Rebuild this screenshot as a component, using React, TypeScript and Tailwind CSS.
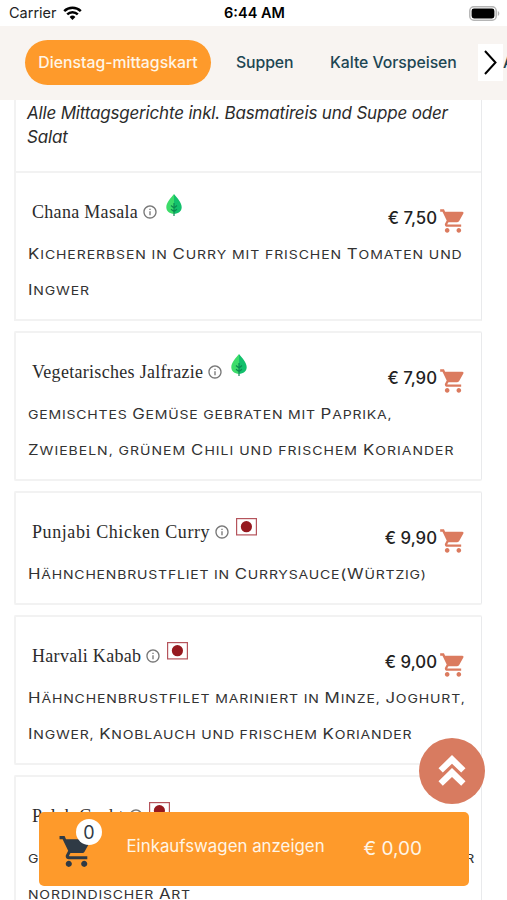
import { Fragment } from 'react'
import { MdShoppingCart, MdInfoOutline } from 'react-icons/md'

type Dish = {
  name: string
  nameClass: string
  kind: 'veg' | 'meat'
  price: string
  lines: { text: string; className: string }[]
}

const featured: Dish = {
  name: 'Chana Masala',
  nameClass: 'tracking-[0.3px]',
  kind: 'veg',
  price: '€ 7,50',
  lines: [
    { text: 'Kichererbsen in Curry mit frischen Tomaten und', className: 'tracking-[0.74px]' },
    { text: 'Ingwer', className: 'tracking-[0.67px]' },
  ],
}

const dishes: Dish[] = [
  {
    name: 'Vegetarisches Jalfrazie',
    nameClass: 'tracking-[0.3px]',
    kind: 'veg',
    price: '€ 7,90',
    lines: [
      { text: 'gemischtes Gemüse gebraten mit Paprika,', className: 'tracking-[0.65px]' },
      { text: 'Zwiebeln, grünem Chili und frischem Koriander', className: 'tracking-[0.81px]' },
    ],
  },
  {
    name: 'Punjabi Chicken Curry',
    nameClass: 'tracking-[0.58px]',
    kind: 'meat',
    price: '€ 9,90',
    lines: [{ text: 'Hähnchenbrustfliet in Currysauce(Würtzig)', className: 'tracking-[0.65px]' }],
  },
  {
    name: 'Harvali Kabab',
    nameClass: 'tracking-[0.3px]',
    kind: 'meat',
    price: '€ 9,00',
    lines: [
      { text: 'Hähnchenbrustfilet mariniert in Minze, Joghurt,', className: 'tracking-[0.7px]' },
      { text: 'Ingwer, Knoblauch und frischem Koriander', className: 'tracking-[0.65px]' },
    ],
  },
  {
    name: 'Palak Gosht',
    nameClass: 'tracking-[0.4px]',
    kind: 'meat',
    price: '€ 9,90',
    lines: [
      { text: 'gebratenes Lammfleisch mit feinem Spinat nach der', className: 'tracking-[0.54px]' },
      { text: 'nordindischer Art', className: 'tracking-[0.65px]' },
    ],
  },
]

export default function App() {
  return (
    <div className="relative flex h-[900px] w-[507px] flex-col overflow-hidden bg-white font-['Inter',sans-serif] text-[#2b2b2b]">
      <StatusBar />
      <CategoryTabs />
      <main className="min-h-0 flex-1 overflow-hidden pl-[14px]">
        <div className="flex w-[467.5px] flex-col gap-[9.6px]">
          <section className="border-2 border-r border-t-0 border-[#f2f2f2] border-r-[#e9eaec]">
            <p className="h-[72.5px] border-b-2 border-[#f2f2f2] pl-[11px] pt-px text-[17px] italic leading-[24px] tracking-[-0.18px]">
              Alle Mittagsgerichte inkl. Basmatireis und Suppe oder
              <br />
              Salat
            </p>
            <DishRow dish={featured} />
          </section>
          {dishes.map((dish) => (
            <section
              key={dish.name}
              className="rounded-[2px] border-2 border-r border-[#f2f2f2] border-r-[#e9eaec]"
            >
              <DishRow dish={dish} />
            </section>
          ))}
        </div>
      </main>
      <ScrollTopButton />
      <CartBar />
    </div>
  )
}

function StatusBar() {
  return (
    <header className="grid h-[26px] shrink-0 grid-cols-3 items-center pl-[9px] pr-[7px] text-black">
      <div className="flex items-center gap-[6px]">
        <span className="text-[14.5px] leading-[26px] text-[#222]">Carrier</span>
        <svg width="19" height="14" viewBox="0 0 19 14" fill="none" stroke="#000" strokeWidth="2.5">
          <path d="M1.2 5.2a12 12 0 0 1 16.6 0" />
          <path d="M4.2 8.4a7.6 7.6 0 0 1 10.6 0" />
          <path d="M9.5 14 6.6 11a4.2 4.2 0 0 1 5.8 0z" fill="#000" stroke="none" />
        </svg>
      </div>
      <span className="text-center text-[14.5px] font-semibold">6:44 AM</span>
      <svg className="justify-self-end" width="31" height="15" viewBox="0 0 31 15">
        <rect x="0.8" y="0.8" width="26.4" height="13.4" rx="4" fill="#fff" stroke="#b5b5b5" strokeWidth="1.5" />
        <rect x="2.6" y="2.6" width="22.8" height="9.8" rx="2.4" fill="#000" />
        <path d="M28.8 5c2 .8 2 4.2 0 5z" fill="#b5b5b5" />
      </svg>
    </header>
  )
}

function CategoryTabs() {
  return (
    <nav className="relative flex h-[74px] shrink-0 items-center overflow-hidden bg-[#f8f4f1] pb-px pl-[25px] text-[15.8px] font-medium text-[#1d4653]">
      <a className="flex h-[45px] w-[186px] shrink-0 items-center justify-center rounded-full bg-[#fe9a2b] text-[#fff5e6]">
        Dienstag-mittagskart
      </a>
      <a className="ml-[25px] w-[57px] shrink-0 whitespace-nowrap tracking-[-0.1px]">Suppen</a>
      <a className="ml-[37px] w-[127px] shrink-0 whitespace-nowrap tracking-[-0.05px]">Kalte Vorspeisen</a>
      <a className="ml-[46px] shrink-0 whitespace-nowrap">A</a>
      <button
        className="absolute left-[478px] top-[18px] flex h-[37px] w-[25px] items-center justify-center bg-white"
        aria-label="Weiter"
      >
        <svg className="-ml-px" width="13" height="25" viewBox="0 0 13 25" fill="none" stroke="#000" strokeWidth="2">
          <path d="M1 1l10.5 11.5L1 24" />
        </svg>
      </button>
    </nav>
  )
}

function DishRow({ dish }: { dish: Dish }) {
  return (
    <article className="pb-[9.6px] pl-[12px]">
      <div className="flex h-[64px] justify-between pr-[13.5px]">
        <div className="flex items-start pl-[4px] pt-[26px]">
          <h3
            className={`whitespace-nowrap font-['Liberation_Serif',serif] text-[18px] leading-[26px] ${dish.nameClass}`}
          >
            {dish.name}
          </h3>
          <MdInfoOutline className="ml-[4px] mt-[5px] size-[16px] text-[#777]" />
          {dish.kind === 'veg' ? <LeafIcon /> : <MeatIcon />}
        </div>
        <div className="mt-[33px] flex h-[28px] items-start">
          <span className="text-[16.8px] font-medium leading-[24px] text-[#222]">{dish.price}</span>
          <MdShoppingCart className="ml-[2px] mt-px size-[28px] text-[#db7b5f]" />
        </div>
      </div>
      {dish.lines.map((line) => (
        <p key={line.text} className="h-[36.5px] whitespace-nowrap text-[11.5px] leading-[36.5px]">
          <span className={`inline-block origin-left scale-x-[1.22] uppercase text-[#333] ${line.className}`}>
            <SmallCaps text={line.text} />
          </span>
        </p>
      ))}
    </article>
  )
}

// capitals are drawn a little larger than the rest of the word
function SmallCaps({ text }: { text: string }) {
  return (
    <>
      {text.split(/([A-Z(]+)/).map((part, i) =>
        /^[A-Z(]+$/.test(part) ? (
          <span key={i} className="text-[1.2em] leading-none">
            {part}
          </span>
        ) : (
          <Fragment key={i}>{part}</Fragment>
        ),
      )}
    </>
  )
}

function LeafIcon() {
  return (
    <svg className="-mt-[5px] ml-[8px]" width="16" height="23" viewBox="0 0 16 23">
      <path d="M8 0C5 3.5.3 8.5.3 13.2.3 17 3.5 19.8 8 19.8z" fill="#3ddc6a" />
      <path d="M8 0c3 3.5 7.7 8.5 7.7 13.2 0 3.8-3.2 6.6-7.7 6.6z" fill="#12c06c" />
      <path
        d="M8 9v13M8 14l-3-2.5M8 14l3-2.5M8 17.5l-3-2.3M8 17.5l3-2.3"
        stroke="#0b8a50"
        strokeWidth="1.2"
        fill="none"
      />
    </svg>
  )
}

function MeatIcon() {
  return (
    <svg className="-mt-px ml-[5.5px]" width="21" height="18" viewBox="0 0 21 18">
      <rect x="0.6" y="0.6" width="19.8" height="16.3" fill="#fff" stroke="#b5545c" strokeWidth="1.2" />
      <circle cx="10.4" cy="8.7" r="5.6" fill="#96191f" />
    </svg>
  )
}

function ScrollTopButton() {
  return (
    <button
      className="absolute left-[419px] top-[737.5px] flex size-[66px] items-center justify-center rounded-full bg-[#d87b60]"
      aria-label="Nach oben"
    >
      <svg width="28" height="31" viewBox="0 0 28 31" fill="#fff">
        <path d="M14 0 27.5 13.3 23.2 17.5 14 8.8 4.8 17.5.5 13.3z" />
        <path d="M14 13 27.5 26.3 23.2 30.7 14 22 4.8 30.7.5 26.3z" />
      </svg>
    </button>
  )
}

function CartBar() {
  return (
    <div className="absolute left-[39px] top-[812px] flex h-[74px] w-[430px] rounded-[5px] bg-[#fe9a2b] text-[#fff5e6]">
      <div className="relative w-[87.5px] shrink-0">
        <MdShoppingCart className="ml-[19px] mt-[21px] size-[37px] text-[#2f3a45]" />
        <span className="absolute left-[37px] top-[7px] flex size-[26px] items-center justify-center rounded-full bg-white text-[18px] text-[#2f3a45]">
          0
        </span>
      </div>
      <span className="mt-[21px] w-[237px] whitespace-nowrap text-[16.85px] leading-[26px]">
        Einkaufswagen anzeigen
      </span>
      <span className="mt-[24px] whitespace-nowrap text-[19px] leading-[26px]">€ 0,00</span>
    </div>
  )
}
